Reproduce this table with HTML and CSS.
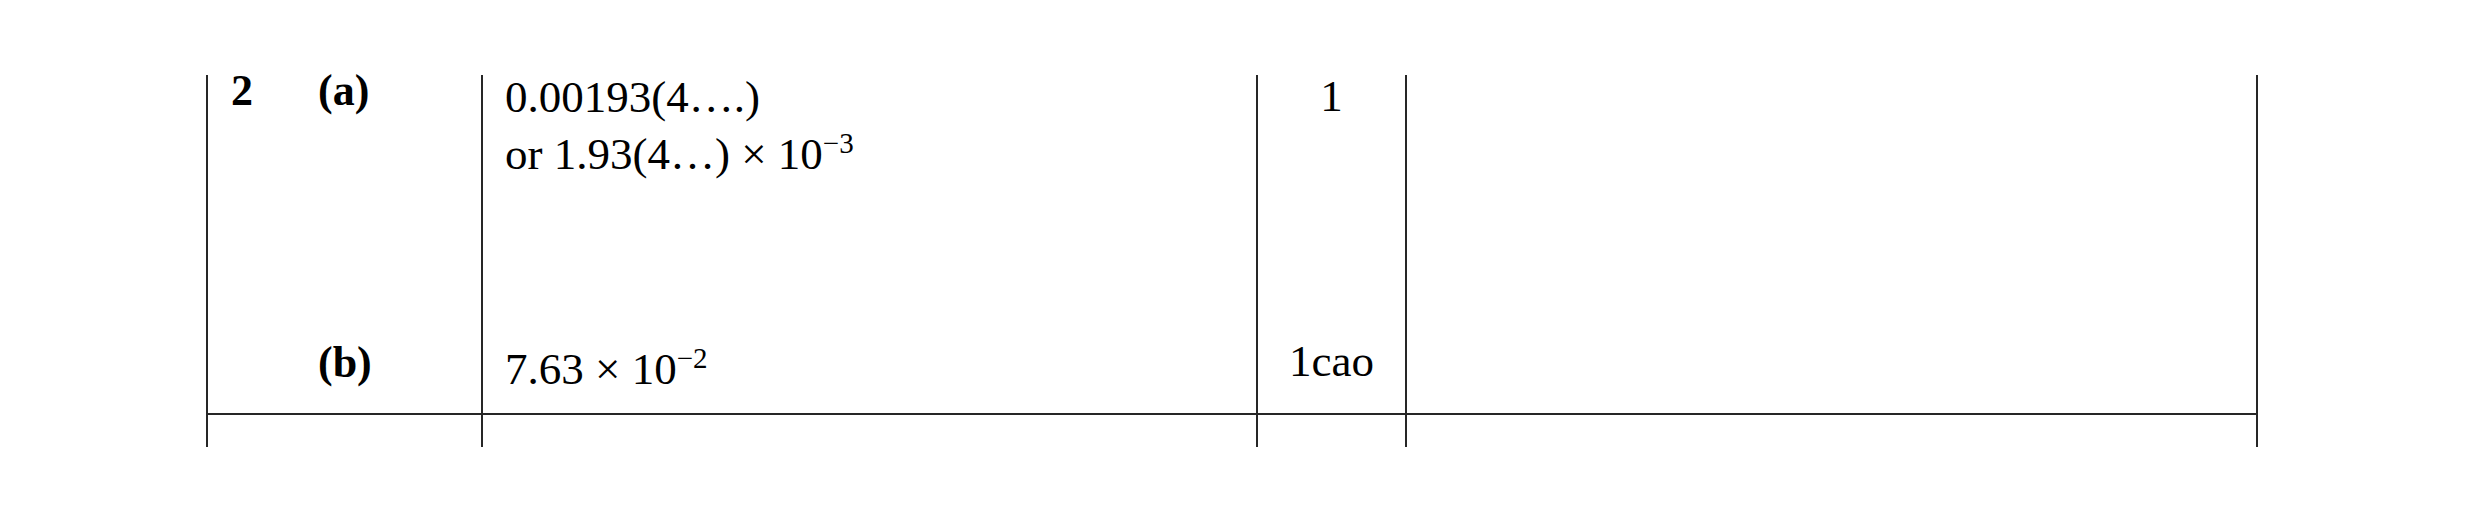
FILE: index.html
```html
<!DOCTYPE html>
<html lang="en">
<head>
<meta charset="utf-8">
<title>Mark scheme</title>
<link rel="stylesheet" href="styles.css">
</head>
<body>
<div class="sheet">
  <div class="row row-a">
    <div class="cell label"><span class="qnum">2</span><span class="part">(a)</span></div>
    <div class="cell answer">
      <div class="line">0.00193(4….)</div>
      <div class="line">or 1.93(4…) × 10<span class="sup">−3</span></div>
    </div>
    <div class="cell mark"><div class="line">1</div></div>
    <div class="cell guidance"></div>
  </div>
  <div class="row row-b">
    <div class="cell label"><span class="qnum"></span><span class="part">(b)</span></div>
    <div class="cell answer">
      <div class="line">7.63 × 10<span class="sup">−2</span></div>
    </div>
    <div class="cell mark"><div class="line">1cao</div></div>
    <div class="cell guidance"></div>
  </div>
  <div class="row row-c">
    <div class="cell label"></div>
    <div class="cell answer"></div>
    <div class="cell mark"></div>
    <div class="cell guidance"></div>
  </div>
</div>
</body>
</html>
```
FILE: styles.css
```css
* { box-sizing: border-box; }

html, body {
  margin: 0;
  padding: 0;
  background: #ffffff;
}

body {
  font-family: "Liberation Serif", "Times New Roman", serif;
  color: #000000;
}

.sheet {
  padding-top: 75px;
  padding-left: 206px;
}

.row {
  display: grid;
  grid-template-columns: 275px 775px 149px 853px;
  width: 2052px;
}

.cell {
  border-left: 2px solid #262626;
}

.cell.guidance {
  border-right: 2px solid #262626;
}

.row-a { height: 255px; }
.row-b { height: 83px; }
.row-c {
  height: 34px;
  border-top: 2px solid #262626;
}

.label {
  display: flex;
  align-items: flex-start;
  padding-left: 23px;
  font-weight: bold;
  font-size: 44px;
  line-height: 32px;
}

.qnum {
  width: 87px;
  flex: none;
}

.answer {
  display: flex;
  flex-direction: column;
  gap: 17px;
  padding-top: 2px;
  padding-left: 22px;
  font-size: 45px;
  line-height: 40px;
}

.mark {
  text-align: center;
  font-size: 45px;
  line-height: 40px;
  padding-top: 1px;
}

.line {
  white-space: nowrap;
}

.sup {
  font-size: 29px;
  line-height: 0;
  vertical-align: 16px;
}

.row-b .label { padding-top: 17px; }
.row-b .answer { padding-top: 19px; }
.row-b .mark { padding-top: 11px; }
```
